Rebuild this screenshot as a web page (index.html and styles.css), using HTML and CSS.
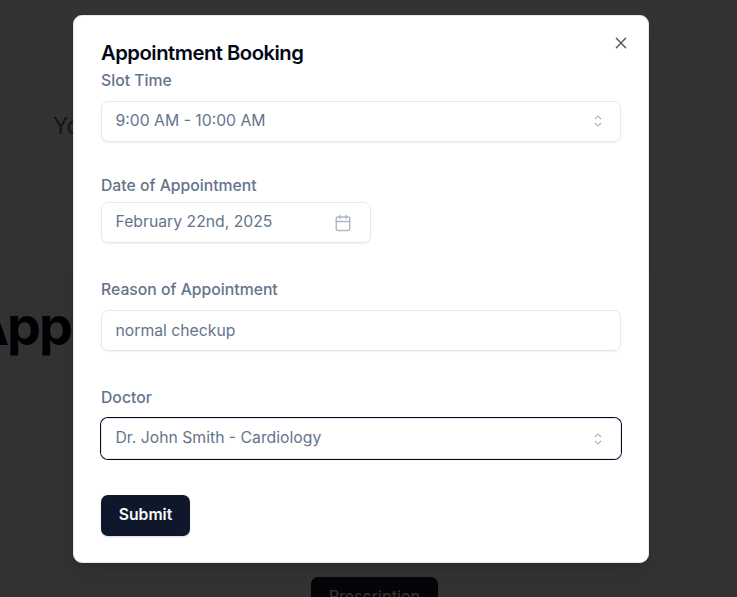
FILE: index.html
```
<!DOCTYPE html>
<html lang="en">
<head>
<meta charset="utf-8">
<title>Appointment Booking</title>
<link rel="stylesheet" href="styles.css">
</head>
<body>
<main class="page">
  <section class="intro"><p class="intro-text">Yo</p></section>
  <section class="plans">
    <h1 class="heading">Appo</h1>
    <button class="page-button">Prescription</button>
  </section>
</main>
<div class="dialog" role="dialog" aria-labelledby="title">
  <button class="close" aria-label="Close">
    <svg viewBox="0 0 15 15"><path fill="currentColor" fill-rule="evenodd" d="M11.78 4.03a.57.57 0 0 0-.81-.81L7.5 6.69 4.03 3.22a.57.57 0 0 0-.81.81L6.69 7.5l-3.47 3.47a.57.57 0 0 0 .81.81L7.5 8.31l3.47 3.47a.57.57 0 0 0 .81-.81L8.31 7.5z"/></svg>
  </button>
  <h2 class="title" id="title">Appointment Booking</h2>
  <form class="form">
    <div class="field slot">
      <span class="label">Slot Time</span>
      <div class="control">
        <span>9:00 AM - 10:00 AM</span>
        <svg class="chevrons" viewBox="0 0 15 15"><path d="m4.9 5.8 2.6-2.4 2.6 2.4M4.9 9.2l2.6 2.4 2.6-2.4"/></svg>
      </div>
    </div>
    <div class="field date">
      <span class="label">Date of Appointment</span>
      <div class="control short">
        <span>February 22nd, 2025</span>
        <svg class="calendar" viewBox="0 0 24 24"><path d="M8 2v4M16 2v4M3 10h18"/><rect x="3" y="4" width="18" height="18" rx="2"/></svg>
      </div>
    </div>
    <div class="field reason">
      <span class="label">Reason of Appointment</span>
      <div class="control input">
        <span>normal checkup</span>
      </div>
    </div>
    <div class="field doctor">
      <span class="label">Doctor</span>
      <div class="control focused">
        <span>Dr. John Smith - Cardiology</span>
        <svg class="chevrons" viewBox="0 0 15 15"><path d="m4.9 5.8 2.6-2.4 2.6 2.4M4.9 9.2l2.6 2.4 2.6-2.4"/></svg>
      </div>
    </div>
    <button class="submit" type="button">Submit</button>
  </form>
</div>
</body>
</html>
```
FILE: styles.css
```
* { box-sizing: border-box; }
body {
  margin: 0;
  height: 597px;
  overflow: hidden;
  font-family: Inter, "Liberation Sans", sans-serif;
  font-size: 15.75px;
  line-height: 22.5px;
  color: #64748b;
}
h1, h2, p { margin: 0; }
button { font: inherit; border: 0; padding: 0; }

.page { height: 597px; overflow: hidden; background: #333; }
.intro { height: 271px; padding: 110px 0 0 53px; }
.intro-text { font-size: 22.5px; line-height: 32px; color: #141517; }
.plans { height: 326px; background: #323232; }
.heading {
  height: 306px;
  margin-left: -31px;
  padding-top: 28px;
  font-size: 54px;
  line-height: 54px;
  font-weight: 700;
  letter-spacing: -2.2px;
  color: #000104;
}
.page-button {
  display: block;
  width: 127px;
  height: 41px;
  margin-left: 311px;
  border-radius: 7px;
  background: #030508;
  color: #323232;
  font-weight: 500;
}

.dialog {
  position: absolute;
  left: 73px;
  top: 14.5px;
  width: 576px;
  height: 548px;
  padding: 25px 27px;
  border: 1px solid #e2e8f0;
  border-radius: 9px;
  background: #fff;
  box-shadow: 0 11px 17px -3px rgba(0, 0, 0, .1), 0 4px 7px -4px rgba(0, 0, 0, .1);
}
.close {
  position: absolute;
  right: 18px;
  top: 18px;
  width: 18px;
  height: 18px;
  background: none;
  color: #4e525f;
}
.close svg { display: block; width: 18px; height: 18px; }
.title {
  margin-bottom: 1px;
  font-size: 20.25px;
  line-height: 23px;
  font-weight: 600;
  letter-spacing: -0.5px;
  color: #020817;
}
.form { display: flex; flex-direction: column; align-items: flex-start; }
.field { width: 100%; display: flex; flex-direction: column; }
.slot { padding-top: 4px; gap: 9px; }
.date { padding-top: 32.5px; gap: 5px; }
.reason { padding-top: 35px; gap: 9px; }
.doctor { padding-top: 35px; gap: 9px; }
.label { font-weight: 500; line-height: 23px; }
.control {
  display: flex;
  align-items: center;
  justify-content: space-between;
  height: 41px;
  padding: 0 13.5px;
  border: 1px solid #e2e8f0;
  border-radius: 7px;
  box-shadow: 0 1px 2px rgba(0, 0, 0, .06);
}
.control.short { width: 270px; }
.control.input { padding-top: 1.5px; }
.control.focused { box-shadow: 0 0 0 1px #020817, 0 1px 2px rgba(0, 0, 0, .05); }
.chevrons, .calendar {
  width: 18px;
  height: 18px;
  fill: none;
  stroke: currentColor;
  opacity: .5;
}
.calendar { margin-right: 5px; stroke-width: 2; stroke-linecap: round; stroke-linejoin: round; }
.submit {
  width: 89px;
  height: 41px;
  margin-top: 35.5px;
  border-radius: 7px;
  background: #0f172a;
  color: #f8fafc;
  font-weight: 600;
  box-shadow: 0 1px 2px rgba(0, 0, 0, .15);
}
```
